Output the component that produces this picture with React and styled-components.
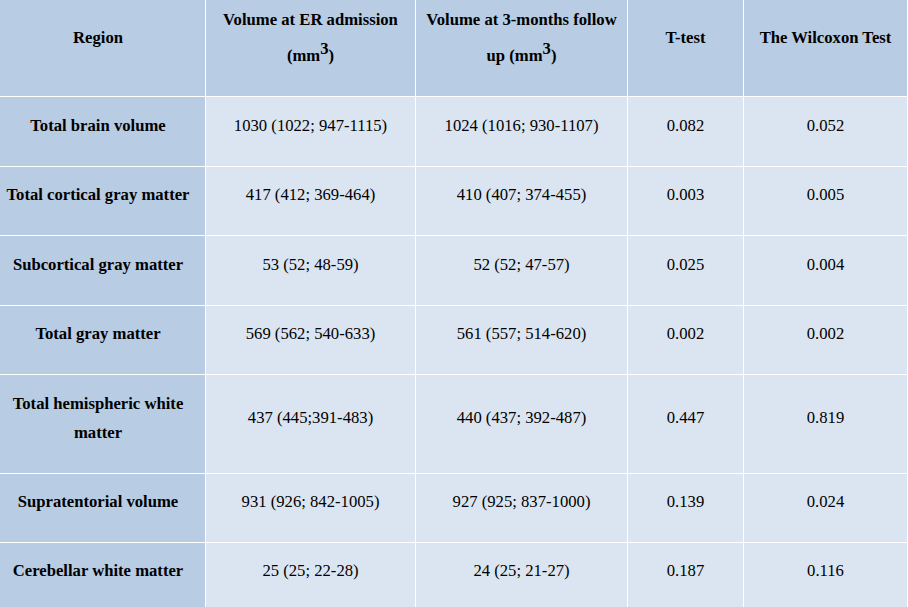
import styled, { createGlobalStyle } from "styled-components";

const Global = createGlobalStyle`
  html, body {
    margin: 0;
    padding: 0;
    overflow: hidden;
    background: #ffffff;
    font-family: "Liberation Serif", "Times New Roman", serif;
  }
`;

const Table = styled.table`
  width: 908px;
  table-layout: fixed;
  border-collapse: separate;
  border-spacing: 0;
  font-family: "Liberation Serif", "Times New Roman", serif;
  font-size: 16.67px;
  color: #000;
`;

const Row = styled.tr`
  height: ${(p) => p.$h}px;
`;

const HeadCell = styled.th`
  box-sizing: border-box;
  background: #b8cce4;
  border-right: 1px solid #ffffff;
  border-bottom: 1px solid #ffffff;
  padding: 0 6px 21px;
  text-align: center;
  vertical-align: middle;
  font-family: "Liberation Serif", "Times New Roman", serif;
  font-weight: bold;
  line-height: 29px;

  &:first-child {
    padding-right: 15px;
  }

  sup {
    font-size: 100%;
    vertical-align: 7px;
  }
`;

const Cell = styled.td`
  box-sizing: border-box;
  background: ${(p) => (p.$label ? "#b8cce4" : "#dbe5f1")};
  font-family: "Liberation Serif", "Times New Roman", serif;
  font-weight: ${(p) => (p.$label ? "bold" : "normal")};
  border-right: 1px solid #ffffff;
  border-bottom: 1px solid #ffffff;
  padding: 0 ${(p) => (p.$label ? "15px" : "6px")} 13px 6px;
  text-align: center;
  vertical-align: middle;
  line-height: 29px;
`;

const rows = [
  { name: "Total brain volume", er: "1030 (1022; 947-1115)", fu: "1024 (1016; 930-1107)", t: "0.082", w: "0.052", h: 70 },
  { name: "Total cortical gray matter", er: "417 (412; 369-464)", fu: "410 (407; 374-455)", t: "0.003", w: "0.005", h: 69 },
  { name: "Subcortical gray matter", er: "53 (52; 48-59)", fu: "52 (52; 47-57)", t: "0.025", w: "0.004", h: 70 },
  { name: "Total gray matter", er: "569 (562; 540-633)", fu: "561 (557; 514-620)", t: "0.002", w: "0.002", h: 69 },
  { name: "Total hemispheric white matter", er: "437 (445;391-483)", fu: "440 (437; 392-487)", t: "0.447", w: "0.819", h: 99 },
  { name: "Supratentorial volume", er: "931 (926; 842-1005)", fu: "927 (925; 837-1000)", t: "0.139", w: "0.024", h: 69 },
  { name: "Cerebellar white matter", er: "25 (25; 22-28)", fu: "24 (25; 21-27)", t: "0.187", w: "0.116", h: 69 },
];

export default function App() {
  return (
    <>
      <Global />
      <Table>
        <colgroup>
          <col style={{ width: 206 }} />
          <col style={{ width: 210 }} />
          <col style={{ width: 212 }} />
          <col style={{ width: 116 }} />
          <col style={{ width: 164 }} />
        </colgroup>
        <thead>
          <Row $h={97}>
            <HeadCell>Region</HeadCell>
            <HeadCell>
              Volume at ER admission (mm<sup>3</sup>)
            </HeadCell>
            <HeadCell>
              Volume at 3-months follow up (mm<sup>3</sup>)
            </HeadCell>
            <HeadCell>T-test</HeadCell>
            <HeadCell>The Wilcoxon Test</HeadCell>
          </Row>
        </thead>
        <tbody>
          {rows.map((r) => (
            <Row key={r.name} $h={r.h}>
              <Cell $label>{r.name}</Cell>
              <Cell>{r.er}</Cell>
              <Cell>{r.fu}</Cell>
              <Cell>{r.t}</Cell>
              <Cell>{r.w}</Cell>
            </Row>
          ))}
        </tbody>
      </Table>
    </>
  );
}
